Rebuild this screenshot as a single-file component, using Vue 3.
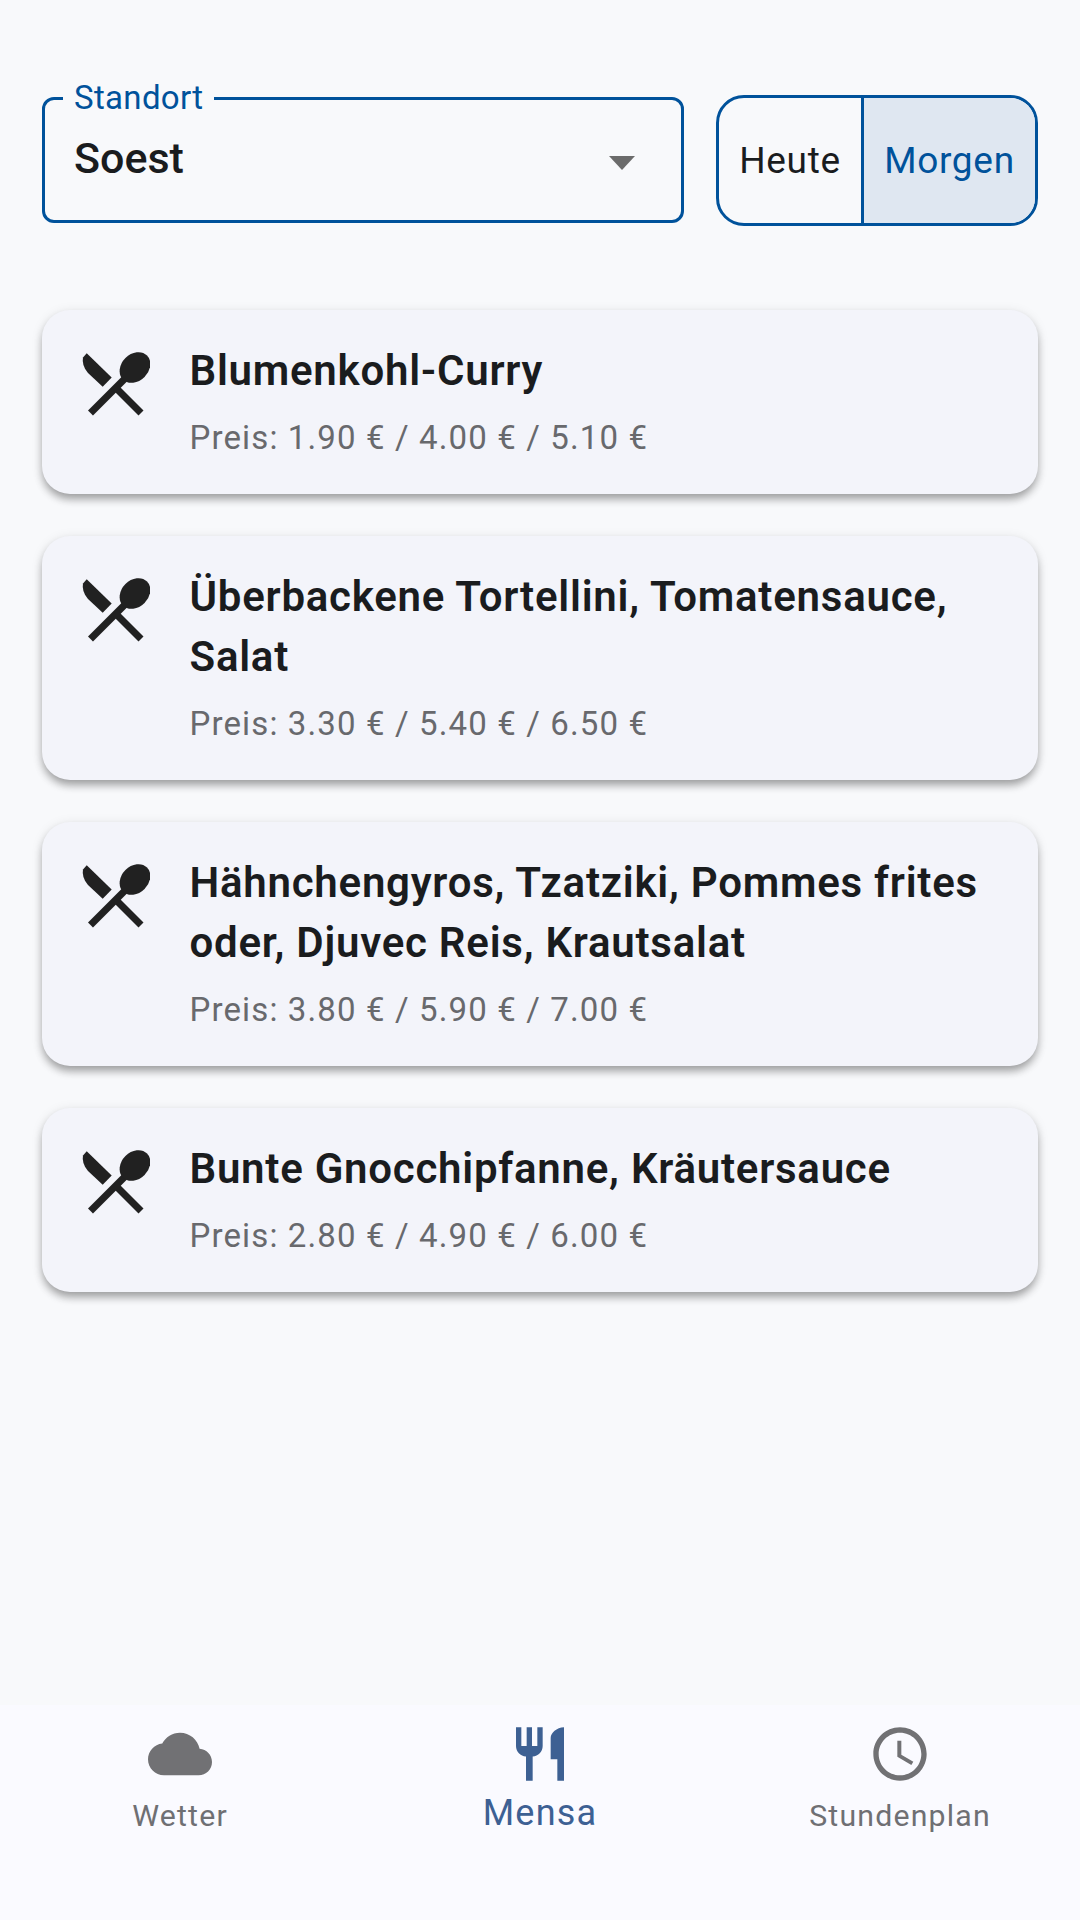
<script setup>
const meals = [
  { name: 'Blumenkohl-Curry', price: 'Preis: 1.90 € / 4.00 € / 5.10 €' },
  { name: 'Überbackene Tortellini, Tomatensauce, Salat', price: 'Preis: 3.30 € / 5.40 € / 6.50 €' },
  { name: 'Hähnchengyros, Tzatziki, Pommes frites oder, Djuvec Reis, Krautsalat', price: 'Preis: 3.80 € / 5.90 € / 7.00 €' },
  { name: 'Bunte Gnocchipfanne, Kräutersauce', price: 'Preis: 2.80 € / 4.90 € / 6.00 €' },
]
</script>

<template>
  <div class="page">
    <main class="content">
      <div class="controls">
        <div class="select">
          <span class="select-label">Standort</span>
          <span class="select-value">Soest</span>
          <span class="select-arrow"></span>
        </div>
        <div class="toggle">
          <div class="toggle-item">Heute</div>
          <div class="toggle-item active">Morgen</div>
        </div>
      </div>
      <div class="list">
        <article v-for="m in meals" :key="m.name" class="card">
          <svg class="meal-icon" viewBox="80 350 70 70" width="70" height="70">
            <path d="M86.7 353.3 L111.7 377.4 L102.7 386.7 L88 373 Q81.5 365.5 83 357.5 Z" fill="#212121" />
            <path d="M116 388 L141 413" stroke="#212121" stroke-width="7" fill="none" />
            <path d="M90.5 413 L125.5 378" stroke="#212121" stroke-width="7" fill="none" />
            <ellipse cx="135" cy="367.5" rx="17" ry="13.5" transform="rotate(-45 135 367.5)" fill="#212121" />
          </svg>
          <div class="meal-text">
            <div class="meal-name">{{ m.name }}</div>
            <div class="meal-price">{{ m.price }}</div>
          </div>
        </article>
      </div>
    </main>
    <nav class="nav">
      <div class="nav-item">
        <svg viewBox="0 0 24 24" width="64" height="64"><path fill="#717174" d="M19.35 10.04C18.67 6.59 15.64 4 12 4 9.11 4 6.6 5.64 5.35 8.04 2.34 8.36 0 10.91 0 14c0 3.31 2.69 6 6 6h13c2.76 0 5-2.24 5-5 0-2.64-2.05-4.78-4.65-4.96z" /></svg>
        <span class="nav-label">Wetter</span>
      </div>
      <div class="nav-item on">
        <svg viewBox="0 0 24 24" width="64" height="64"><path fill="#3d6093" d="M11 9H9V2H7v7H5V2H3v7c0 2.12 1.66 3.84 3.75 3.97V22h2.5v-9.03C11.34 12.84 13 11.12 13 9V2h-2v7zm5-3v8h2.5v8H21V2c-2.76 0-5 2.24-5 4z" /></svg>
        <span class="nav-label">Mensa</span>
      </div>
      <div class="nav-item">
        <svg viewBox="0 0 24 24" width="64" height="64"><path fill="#717174" d="M11.99 2C6.47 2 2 6.48 2 12s4.47 10 9.99 10C17.52 22 22 17.52 22 12S17.52 2 11.99 2zM12 20c-4.42 0-8-3.58-8-8s3.58-8 8-8 8 3.58 8 8-3.58 8-8 8zm.5-13H11v6l5.25 3.15.75-1.23-4.5-2.67z" /></svg>
        <span class="nav-label">Stundenplan</span>
      </div>
    </nav>
  </div>
</template>

<style scoped>
.page {
  width: 1080px;
  height: 1920px;
  display: flex;
  flex-direction: column;
  background: #f8f9fb;
  font-family: Roboto, sans-serif;
  color: #1a1c1e;
}
.content {
  flex: 1;
  padding: 95px 42px 0;
}
.controls {
  display: flex;
  align-items: flex-start;
  gap: 32px;
}
.select {
  position: relative;
  box-sizing: border-box;
  width: 642px;
  height: 126px;
  margin-top: 2px;
  border: 3px solid #00529b;
  border-radius: 12px;
  display: flex;
  align-items: flex-start;
  justify-content: space-between;
  padding: 30px 46px 0 29px;
}
.select-label {
  position: absolute;
  left: 18px;
  top: -20px;
  padding: 0 11px;
  background: #f8f9fb;
  color: #00529b;
  font-size: 33px;
  line-height: 36px;
  letter-spacing: 0.33px;
}
.select-value {
  font-size: 43px;
  line-height: 56px;
  font-weight: 500;
}
.select-arrow {
  width: 0;
  height: 0;
  margin-top: 26px;
  border-left: 13px solid transparent;
  border-right: 13px solid transparent;
  border-top: 14px solid #6b6b6b;
}
.toggle {
  box-sizing: border-box;
  display: flex;
  width: 322px;
  height: 131px;
  border: 3px solid #00529b;
  border-radius: 28px;
  overflow: hidden;
}
.toggle-item {
  display: flex;
  align-items: center;
  justify-content: center;
  width: 142px;
  font-size: 37px;
  letter-spacing: 0.7px;
}
.toggle-item.active {
  flex: 1;
  border-left: 3px solid #00529b;
  background: #dfe7f1;
  color: #00529b;
}
.list {
  display: flex;
  flex-direction: column;
  gap: 42px;
  margin-top: 84px;
}
.card {
  display: flex;
  align-items: flex-start;
  gap: 40px;
  padding: 31px 40px 36px 37.5px;
  border-radius: 28px;
  background: #f3f4fa;
  box-shadow: 0 6px 9px -1px rgba(0, 0, 0, 0.32), 0 2px 12px rgba(0, 0, 0, 0.1);
}
.meal-icon {
  flex: none;
  margin-top: 9px;
}
.meal-text {
  flex: 1;
}
.meal-name {
  font-size: 42px;
  line-height: 60px;
  font-weight: 600;
  letter-spacing: 0.75px;
}
.meal-price {
  margin-top: 17px;
  font-size: 33px;
  line-height: 40px;
  color: #68696d;
  letter-spacing: 1.13px;
}
.nav {
  display: grid;
  grid-template-columns: repeat(3, 1fr);
  height: 215px;
  box-sizing: border-box;
  padding-top: 17px;
  background: #fafaff;
}
.nav-item {
  display: flex;
  flex-direction: column;
  align-items: center;
  color: #6f6f73;
}
.nav-label {
  margin-top: 12px;
  font-size: 30.25px;
  line-height: 36px;
  letter-spacing: 1.2px;
}
.nav-item.on {
  color: #3d6093;
}
.nav-item.on .nav-label {
  margin-top: 6px;
  font-size: 36px;
  line-height: 42px;
}
</style>
